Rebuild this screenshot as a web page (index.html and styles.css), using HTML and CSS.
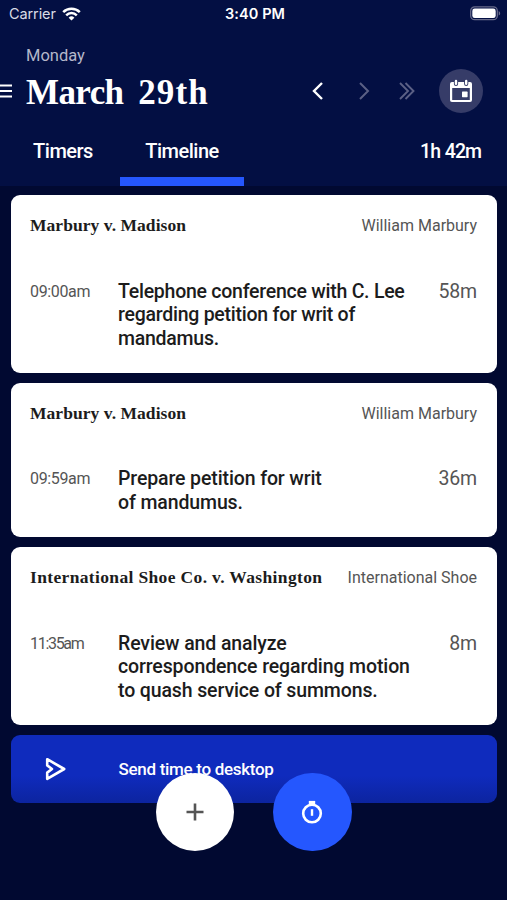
FILE: index.html
```
<!DOCTYPE html>
<html lang="en">
<head>
    <meta charset="UTF-8">
    <meta name="viewport" content="width=device-width, initial-scale=1.0">
    <title>Timeline</title>
    <link rel="stylesheet" href="styles.css">
</head>
<body>
    <header class="header">
        <div class="status-bar">
            <div class="carrier">
                <span class="carrier-name">Carrier</span>
                <svg width="19" height="14" viewBox="0 0 19 14" fill="none" stroke="#fff" stroke-width="2.5">
                    <path d="M1.2 5.2a11.8 11.8 0 0 1 16.6 0"/>
                    <path d="M4.2 8.3a7.5 7.5 0 0 1 10.6 0"/>
                    <path d="M9.5 13.6L6.6 10.7a4.1 4.1 0 0 1 5.8 0z" fill="#fff" stroke="none"/>
                </svg>
            </div>
            <span class="clock">3:40 PM</span>
            <svg class="battery" width="31" height="15" viewBox="0 0 31 15">
                <rect x=".7" y=".9" width="26.6" height="12.8" rx="4" fill="none" stroke="#686b8b" stroke-width="1.3"/>
                <rect x="2.3" y="2.5" width="23.4" height="9.6" rx="2.4" fill="#fff"/>
                <path d="M28.7 5v4.6c2-.9 2-3.7 0-4.6z" fill="#686b8b"/>
            </svg>
        </div>

        <p class="weekday">Monday</p>

        <div class="date-row">
            <svg class="menu" width="13" height="14" viewBox="0 0 13 14" stroke="#fff" stroke-width="2">
                <path d="M0 1.5h12M0 7h12M0 12.5h12"/>
            </svg>
            <h1><span class="month">March</span> <span class="day">29th</span></h1>
            <nav class="date-nav">
                <svg class="prev" width="12" height="18" viewBox="0 0 12 18" fill="none" stroke="#fff" stroke-width="2.4">
                    <path d="M10 1L2 9l8 8"/>
                </svg>
                <svg width="12" height="18" viewBox="0 0 12 18" fill="none" stroke="#5b6085" stroke-width="2">
                    <path d="M2 1l8 8-8 8"/>
                </svg>
                <svg width="16" height="18" viewBox="0 0 16 18" fill="none" stroke="#5b6085" stroke-width="1.9">
                    <path d="M1 1l8 8-8 8M6.5 1l8 8-8 8"/>
                </svg>
            </nav>
            <button class="calendar">
                <svg width="24" height="24" viewBox="0 0 24 24">
                    <path d="M3 3h18q2 0 2 2v16q0 2-2 2H3q-2 0-2-2V5q0-2 2-2z" fill="#fff"/>
                    <path d="M3.2 9h17.6v12H3.2z" fill="#363c68"/>
                    <rect x="13" y="12.6" width="5.6" height="5.6" rx=".6" fill="#fff"/>
                    <path d="M7 0v5M17.2 0v5" stroke="#363c68" stroke-width="4.2" stroke-linecap="round"/>
                    <path d="M7 2v2.8M17.2 2v2.8" stroke="#fff" stroke-width="2.4" stroke-linecap="round"/>
                </svg>
            </button>
        </div>

        <div class="tabs">
            <a class="tab">Timers</a>
            <a class="tab active">Timeline</a>
            <span class="total">1h 42m</span>
        </div>
    </header>

    <main class="timeline">
        <article class="card">
            <div class="card-head">
                <h2>Marbury v. Madison</h2>
                <span class="client">William Marbury</span>
            </div>
            <div class="entry">
                <span class="time">09:00am</span>
                <p class="note tight">Telephone conference with C. Lee<br>regarding petition for writ of<br>mandamus.</p>
                <span class="duration">58m</span>
            </div>
        </article>

        <article class="card">
            <div class="card-head">
                <h2>Marbury v. Madison</h2>
                <span class="client">William Marbury</span>
            </div>
            <div class="entry">
                <span class="time">09:59am</span>
                <p class="note">Prepare petition for writ<br>of mandumus.</p>
                <span class="duration">36m</span>
            </div>
        </article>

        <article class="card">
            <div class="card-head">
                <h2 class="long">International Shoe Co. v. Washington</h2>
                <span class="client">International Shoe</span>
            </div>
            <div class="entry">
                <span class="time narrow">11:35am</span>
                <p class="note">Review and analyze<br>correspondence regarding motion<br>to quash service of summons.</p>
                <span class="duration">8m</span>
            </div>
        </article>

        <div class="send">
            <svg width="22" height="24" viewBox="0 0 22 24" fill="none" stroke="#fff" stroke-width="2.6" stroke-linejoin="round">
                <path d="M2.2 2.2L19.2 12 2.2 21.8V15.6L7 12 2.2 8.4z"/>
            </svg>
            <span>Send time to desktop</span>
        </div>
    </main>

    <div class="actions">
        <button class="fab fab-add">
            <svg width="18" height="18" viewBox="0 0 18 18" stroke="#555" stroke-width="2.6">
                <path d="M9 .5v17M.5 9h17"/>
            </svg>
        </button>
        <button class="fab fab-timer">
            <svg width="22" height="24" viewBox="0 0 22 24" fill="none" stroke="#fff">
                <circle cx="11" cy="13.5" r="8.8" stroke-width="2.6"/>
                <path d="M7.8 2.8h6.4" stroke-width="3.8"/>
                <path d="M11 9.2v6.6" stroke-width="2.4"/>
            </svg>
        </button>
    </div>
</body>
</html>
```
FILE: styles.css
```
* {
    box-sizing: border-box;
}
body {
    margin: 0;
    height: 900px;
    overflow: hidden;
    position: relative;
    background: #010931;
    font-family: Roboto, "Liberation Sans", sans-serif;
    color: white;
}
h1, h2, p {
    margin: 0;
}
button {
    display: flex;
    align-items: center;
    justify-content: center;
    padding: 0;
    border: none;
    border-radius: 50%;
}
svg {
    display: block;
    flex: none;
}
.header {
    height: 186px;
    background: #030f43;
}
.status-bar {
    display: grid;
    grid-template-columns: 1fr auto 1fr;
    align-items: center;
    height: 27px;
    padding: 0 6px 0 9px;
    font-family: Inter, sans-serif;
    font-size: 14.5px;
}
.carrier {
    display: flex;
    align-items: center;
    gap: 6px;
    color: #d9dbe6;
}
.carrier-name {
    letter-spacing: -0.1px;
}
.clock {
    font-weight: 600;
    letter-spacing: 0.1px;
}
.battery {
    justify-self: end;
}
.weekday {
    height: 42px;
    padding: 17px 0 0 26px;
    font-size: 16.5px;
    line-height: 24px;
    letter-spacing: 0;
    color: #b4b7ca;
}
.date-row {
    display: flex;
    align-items: center;
    height: 44px;
    padding-right: 24px;
}
.menu {
    margin-right: 13px;
}
h1 {
    padding-top: 4px;
    font-family: "Liberation Serif", serif;
    font-size: 35px;
    line-height: 44px;
    white-space: nowrap;
}
.month {
    letter-spacing: -0.6px;
}
.day {
    margin-left: 6px;
    letter-spacing: 1.1px;
}
.date-nav {
    display: flex;
    gap: 29px;
    margin-left: auto;
    margin-right: 24px;
}
.prev {
    margin-right: 5px;
}
.calendar {
    width: 44px;
    height: 44px;
    background: #363c68;
}
.tabs {
    display: flex;
    height: 73px;
    padding-left: 6px;
    font-size: 20px;
    font-weight: 500;
    line-height: 77px;
    letter-spacing: -0.5px;
}
.tab {
    width: 114px;
    text-align: center;
}
.tab.active {
    width: 124px;
    border-bottom: 9px solid #2557fe;
}
.total {
    margin-left: auto;
    padding-right: 26px;
    font-size: 19.5px;
    letter-spacing: -1px;
    word-spacing: 1px;
}
.timeline {
    display: flex;
    flex-direction: column;
    gap: 9.75px;
    padding: 9px 10px 0 11px;
}
.card {
    padding: 19px 20px 23px 19px;
    border-radius: 9px;
    background: white;
    color: #1c1c1c;
}
.card-head {
    display: flex;
    justify-content: space-between;
    height: 24px;
    margin-bottom: 41.5px;
    line-height: 24px;
    white-space: nowrap;
}
h2 {
    font-family: "Liberation Serif", serif;
    font-size: 17.5px;
    line-height: 23px;
    letter-spacing: 0.05px;
}
h2.long {
    letter-spacing: 0.35px;
}
.client {
    font-size: 16px;
    color: #555;
}
.entry {
    display: grid;
    grid-template-columns: 88px 1fr auto;
    line-height: 23.5px;
    white-space: nowrap;
}
.time {
    font-size: 16px;
    letter-spacing: -0.35px;
    color: #555;
}
.time.narrow {
    letter-spacing: -1.3px;
}
.note {
    font-size: 19.5px;
    font-weight: 500;
    letter-spacing: -0.12px;
}
.note.tight {
    letter-spacing: -0.25px;
}
.duration {
    font-size: 19.5px;
    letter-spacing: -0.2px;
    color: #555;
}
.send {
    display: flex;
    align-items: center;
    gap: 52px;
    height: 68px;
    padding-left: 33.5px;
    border-radius: 9px;
    background: linear-gradient(#0f2bbd 60%, #0c249f);
    font-size: 17px;
    font-weight: 500;
    letter-spacing: -0.3px;
}
/* floating buttons sit over the end of the list */
.actions {
    position: absolute;
    left: 0;
    right: 0;
    bottom: 49px;
    display: flex;
    justify-content: center;
    gap: 39px;
}
.fab {
    width: 78.5px;
    height: 78.5px;
}
.fab-add {
    background: white;
}
.fab-timer {
    background: #2557fe;
}
```
